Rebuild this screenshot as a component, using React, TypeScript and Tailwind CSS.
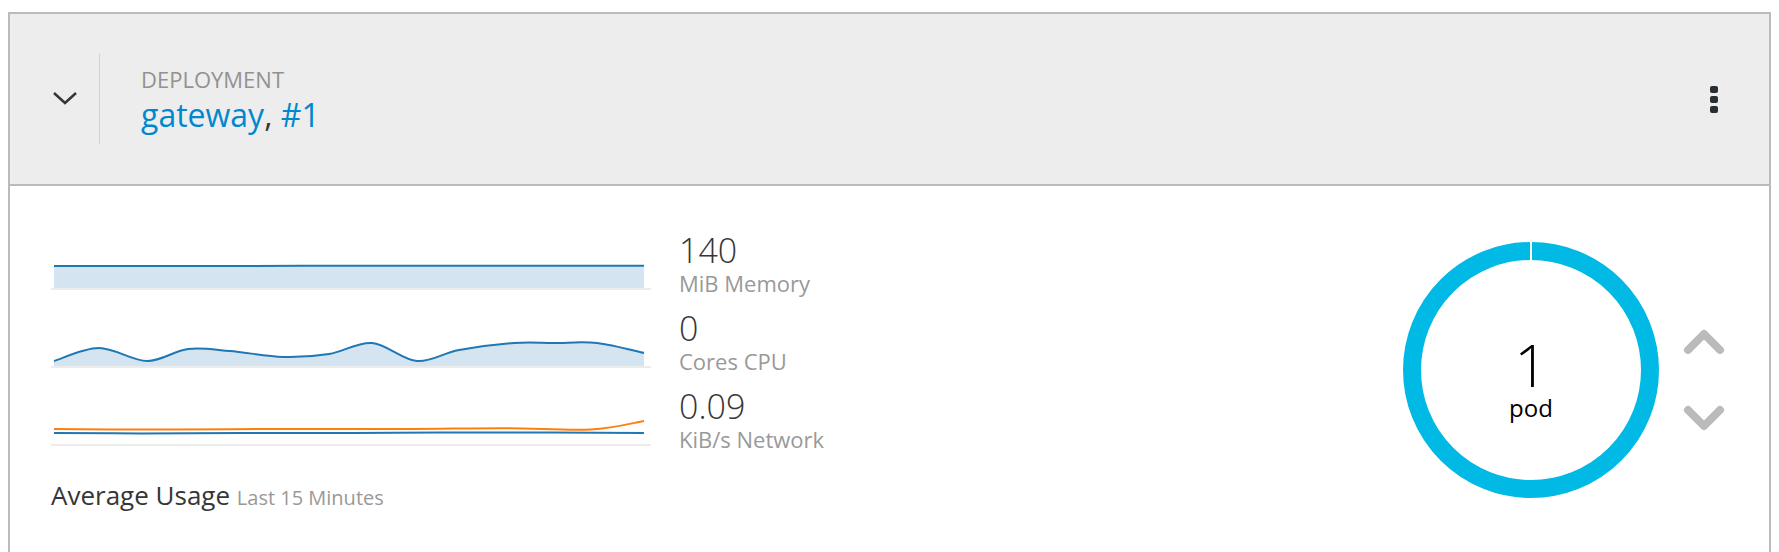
import React from "react";

type Pt = [number, number];

// catmull-rom -> cubic bezier, good enough for sparklines
function smoothPath(pts: Pt[]): string {
  let d = `M${pts[0][0]},${pts[0][1]}`;
  for (let i = 0; i < pts.length - 1; i++) {
    const p0 = pts[i - 1] || pts[i];
    const p1 = pts[i];
    const p2 = pts[i + 1];
    const p3 = pts[i + 2] || p2;
    const c1x = p1[0] + (p2[0] - p0[0]) / 6;
    const c1y = p1[1] + (p2[1] - p0[1]) / 6;
    const c2x = p2[0] - (p3[0] - p1[0]) / 6;
    const c2y = p2[1] - (p3[1] - p1[1]) / 6;
    d += ` C${c1x},${c1y} ${c2x},${c2y} ${p2[0]},${p2[1]}`;
  }
  return d;
}

const memoryPts: Pt[] = [
  [3, 54],
  [150, 54],
  [300, 53.7],
  [450, 53.8],
  [593, 53.8],
];

const cpuPts: Pt[] = [
  [3, 71],
  [48, 58],
  [96, 71],
  [137, 59],
  [179, 61],
  [232, 67],
  [278, 64],
  [321, 53],
  [366, 71],
  [408, 60],
  [463, 53],
  [503, 53],
  [546, 53],
  [593, 63],
];

const netOut: Pt[] = [
  [3, 61],
  [90, 61.6],
  [179, 61.2],
  [260, 61],
  [360, 61],
  [455, 60.2],
  [540, 61.5],
  [593, 53],
];

const netIn: Pt[] = [
  [3, 65],
  [90, 65.4],
  [190, 65],
  [300, 65],
  [455, 64.4],
  [593, 65],
];

function Sparkline({
  lines,
  fill,
}: {
  lines: { pts: Pt[]; color: string }[];
  fill?: boolean;
}) {
  const main = lines[0].pts;
  const path = smoothPath(main);
  const area = `${path} L${main[main.length - 1][0]},76 L${main[0][0]},76 Z`;
  return (
    <svg width="600" height="78" viewBox="0 0 600 78" className="shrink-0">
      {fill && <path d={area} fill="#d4e4f0" />}
      <line x1="0" y1="77" x2="600" y2="77" stroke="#ececec" strokeWidth="2" />
      {lines.map((l, i) => (
        <path
          key={i}
          d={smoothPath(l.pts)}
          fill="none"
          stroke={l.color}
          strokeWidth="2"
        />
      ))}
    </svg>
  );
}

function MetricRow({
  value,
  label,
  children,
}: {
  value: string;
  label: string;
  children: React.ReactNode;
}) {
  return (
    <div className="flex h-[78px]">
      {children}
      <div className="ml-[28px] pt-[21px]">
        <div className="text-[34px] leading-[34px] font-light text-[#363636]">{value}</div>
        <div className="mt-[3px] text-[22px] leading-[26px] text-[#999] whitespace-nowrap">
          {label}
        </div>
      </div>
    </div>
  );
}

export default function App() {
  return (
    <div
      className="min-h-[552px] w-full overflow-hidden bg-white pt-[12px]"
      style={{ fontFamily: "'Open Sans', 'Liberation Sans', sans-serif" }}
    >
      <div className="mx-[8px] border-2 border-b-0 border-[#bbb]">
        {/* header */}
        <div className="flex h-[172px] items-center border-b-2 border-[#bbb] bg-[#ededed] pr-[51px]">
          <svg width="26" height="16" viewBox="0 0 26 16" className="ml-[42px] -mt-[3px]">
            <polyline
              points="2,3 13,13 24,3"
              fill="none"
              stroke="#363636"
              strokeWidth="2.5"
            />
          </svg>
          <div className="ml-[21px] h-[90px] w-px bg-[#d1d1d1]" />
          <div className="ml-[41px]">
            <div className="text-[22px] leading-[26px] text-[#929292]">DEPLOYMENT</div>
            <div className="mt-[4px] text-[32px] leading-[37px] text-[#363636]">
              <span className="text-[#0088ce]">gateway</span>,{" "}
              <span className="text-[#0088ce]">#1</span>
            </div>
          </div>
          <div className="flex-1" />
          <div className="flex flex-col gap-[3px]">
            <div className="h-[7px] w-[8px] rounded-[2px] bg-[#292e34]" />
            <div className="h-[7px] w-[8px] rounded-[2px] bg-[#292e34]" />
            <div className="h-[7px] w-[8px] rounded-[2px] bg-[#292e34]" />
          </div>
        </div>

        {/* body */}
        <div className="flex h-[380px]">
          <div className="flex-1 pl-[41px] pt-[26px]">
            <MetricRow value="140" label="MiB Memory">
              <Sparkline fill lines={[{ pts: memoryPts, color: "#1f77b4" }]} />
            </MetricRow>
            <MetricRow value="0" label="Cores CPU">
              <Sparkline fill lines={[{ pts: cpuPts, color: "#1f77b4" }]} />
            </MetricRow>
            <MetricRow value="0.09" label="KiB/s Network">
              <Sparkline
                lines={[
                  { pts: netOut, color: "#ff7f0e" },
                  { pts: netIn, color: "#1f77b4" },
                ]}
              />
            </MetricRow>
            <div className="mt-[34px] whitespace-nowrap text-[26px] leading-[31px] text-[#363636]">
              Average Usage <span className="text-[20px] text-[#999]">Last 15 Minutes</span>
            </div>
          </div>

          <div className="flex items-start pr-[43px]">
            <div className="relative mt-[54px] h-[260px] w-[260px]">
              <svg width="260" height="260" viewBox="0 0 260 260" className="absolute inset-0">
                <circle cx="130" cy="130" r="119" fill="none" stroke="#00b9e4" strokeWidth="18" />
                <rect x="129" y="0" width="2" height="24" fill="#fff" />
              </svg>
              <div className="relative flex flex-col items-center pt-[98px] text-black">
                <div className="text-[59px] leading-[52px] font-light">1</div>
                <div className="mt-[4px] text-[24px] leading-[28px]">pod</div>
              </div>
            </div>
            <div className="ml-[21px] mt-[139px] flex flex-col gap-[50px]">
              <svg width="44" height="30" viewBox="0 0 44 30">
                <polyline
                  points="6,25 22,9 38,25"
                  fill="none"
                  stroke="#bbb"
                  strokeWidth="8"
                  strokeLinecap="round"
                  strokeLinejoin="round"
                />
              </svg>
              <svg width="44" height="30" viewBox="0 0 44 30">
                <polyline
                  points="6,5 22,21 38,5"
                  fill="none"
                  stroke="#bbb"
                  strokeWidth="8"
                  strokeLinecap="round"
                  strokeLinejoin="round"
                />
              </svg>
            </div>
          </div>
        </div>
      </div>
    </div>
  );
}
